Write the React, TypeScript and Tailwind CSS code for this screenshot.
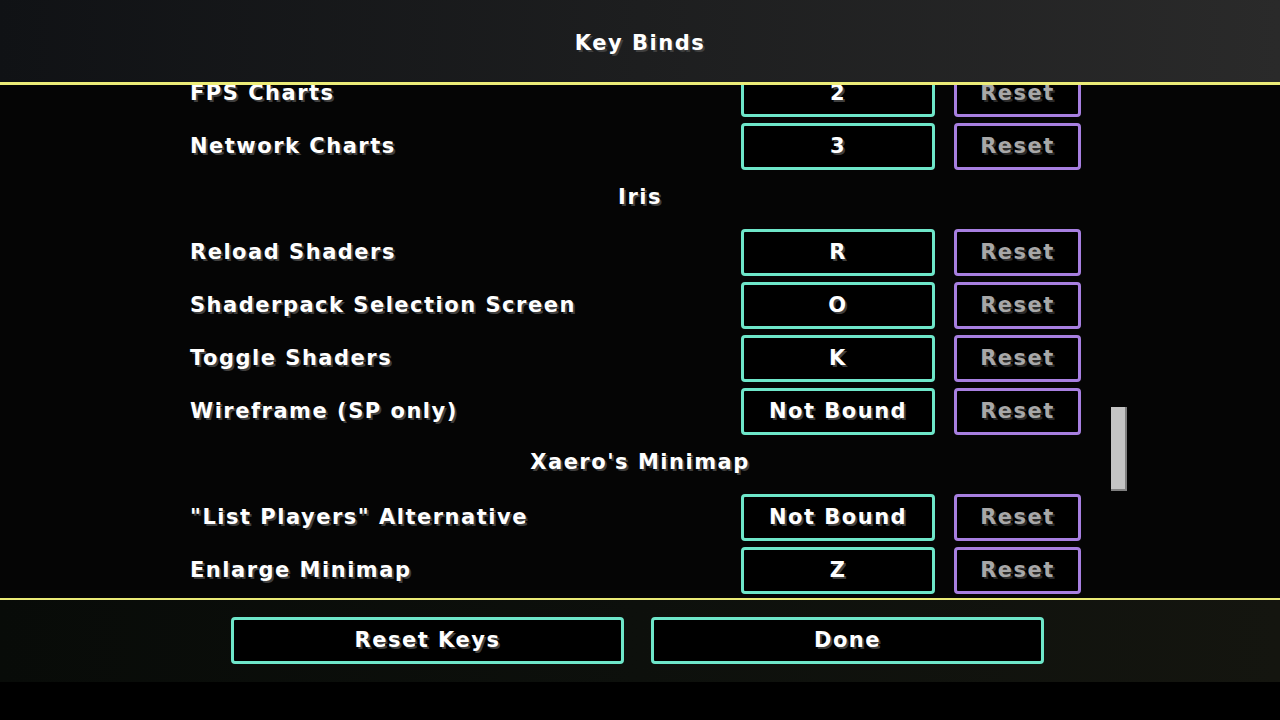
import React from "react";

const font = { fontFamily: '"DejaVu Sans", "Noto Sans", sans-serif' };

type Item =
  | { kind: "row"; label: string; key: string }
  | { kind: "header"; label: string };

const items: Item[] = [
  { kind: "row", label: "FPS Charts", key: "2" },
  { kind: "row", label: "Network Charts", key: "3" },
  { kind: "header", label: "Iris" },
  { kind: "row", label: "Reload Shaders", key: "R" },
  { kind: "row", label: "Shaderpack Selection Screen", key: "O" },
  { kind: "row", label: "Toggle Shaders", key: "K" },
  { kind: "row", label: "Wireframe (SP only)", key: "Not Bound" },
  { kind: "header", label: "Xaero's Minimap" },
  { kind: "row", label: "\"List Players\" Alternative", key: "Not Bound" },
  { kind: "row", label: "Enlarge Minimap", key: "Z" },
];

function McText({ children, gray }: { children: React.ReactNode; gray?: boolean }) {
  return (
    <span
      className={
        gray
          ? "text-[#a8a8a8] [text-shadow:2px_2px_0_#2a2a2a]"
          : "text-white [text-shadow:2px_2px_0_#3f3f3f]"
      }
    >
      {children}
    </span>
  );
}

function KeyButton({ children }: { children: React.ReactNode }) {
  return (
    <div className="w-[194px] h-[47px] border-[3px] border-[#6ee6c9] rounded-[4px] bg-black flex items-center justify-center">
      <McText>{children}</McText>
    </div>
  );
}

function ResetButton() {
  return (
    <div className="w-[127px] h-[47px] border-[3px] border-[#a77fe0] rounded-[4px] bg-black flex items-center justify-center">
      <McText gray>Reset</McText>
    </div>
  );
}

export default function App() {
  return (
    <div
      className="w-[1280px] h-[720px] bg-black flex flex-col text-[21px] font-bold tracking-[1.5px] overflow-hidden"
      style={font}
    >
      <div className="h-[82px] shrink-0 flex items-center justify-center pt-[5px] bg-gradient-to-r from-[#101215] via-[#1d1e1f] to-[#2a2a2a]">
        <McText>Key Binds</McText>
      </div>
      <div className="h-[3px] shrink-0 bg-[#ecec78]" />
      <div className="relative h-[513px] shrink-0 overflow-hidden bg-[#050505]">
        <div className="-mt-[15px] flex flex-col">
          {items.map((it, i) =>
            it.kind === "header" ? (
              <div key={i} className="h-[53px] flex items-start justify-center pt-[6px]">
                <McText>{it.label}</McText>
              </div>
            ) : (
              <div key={i} className="h-[53px] flex items-start pl-[190px] pr-[199px]">
                <div className="flex-1 h-[47px] flex items-center">
                  <McText>{it.label}</McText>
                </div>
                <KeyButton>{it.key}</KeyButton>
                <div className="ml-[19px]">
                  <ResetButton />
                </div>
              </div>
            )
          )}
        </div>
        <div className="absolute left-[1111px] top-[322px] w-[16px] h-[84px] bg-[#c4c4c4] border-r-2 border-b-2 border-[#7f7f7f]" />
      </div>
      <div className="h-[2px] shrink-0 bg-[#ecec78]" />
      <div className="h-[82px] shrink-0 flex justify-center gap-[27px] pt-[17px] pr-[5px] bg-gradient-to-r from-[#080b08] via-[#0d100c] to-[#14150f]">
        <div className="w-[393px] h-[47px] border-[3px] border-[#6ee6c9] rounded-[4px] bg-black flex items-center justify-center">
          <McText>Reset Keys</McText>
        </div>
        <div className="w-[393px] h-[47px] border-[3px] border-[#6ee6c9] rounded-[4px] bg-black flex items-center justify-center">
          <McText>Done</McText>
        </div>
      </div>
      <div className="flex-1 bg-black" />
    </div>
  );
}
